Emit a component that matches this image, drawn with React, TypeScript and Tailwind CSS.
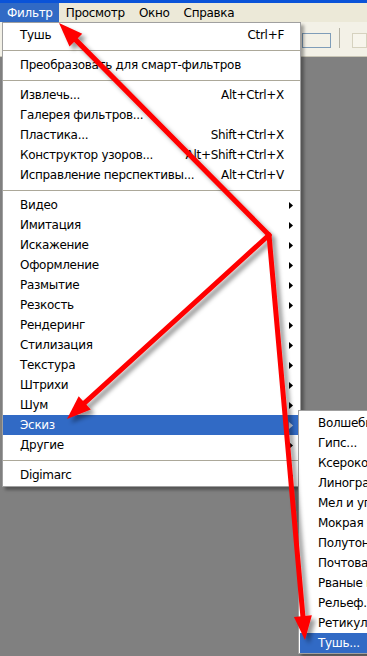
import React from 'react';

type Item =
  | { kind: 'sep' }
  | { kind: 'item'; label: string; shortcut?: string; sub?: boolean; active?: boolean };

const sep: Item = { kind: 'sep' };
const it = (label: string, extra: Partial<{ shortcut: string; sub: boolean; active: boolean }> = {}): Item => ({
  kind: 'item',
  label,
  ...extra,
});

const filterMenu: Item[] = [
  it('Тушь', { shortcut: 'Ctrl+F' }),
  sep,
  it('Преобразовать для смарт-фильтров'),
  sep,
  it('Извлечь...', { shortcut: 'Alt+Ctrl+X' }),
  it('Галерея фильтров...'),
  it('Пластика...', { shortcut: 'Shift+Ctrl+X' }),
  it('Конструктор узоров...', { shortcut: 'Alt+Shift+Ctrl+X' }),
  it('Исправление перспективы...', { shortcut: 'Alt+Ctrl+V' }),
  sep,
  it('Видео', { sub: true }),
  it('Имитация', { sub: true }),
  it('Искажение', { sub: true }),
  it('Оформление', { sub: true }),
  it('Размытие', { sub: true }),
  it('Резкость', { sub: true }),
  it('Рендеринг', { sub: true }),
  it('Стилизация', { sub: true }),
  it('Текстура', { sub: true }),
  it('Штрихи', { sub: true }),
  it('Шум', { sub: true }),
  it('Эскиз', { sub: true, active: true }),
  it('Другие', { sub: true }),
  sep,
  it('Digimarc', { sub: true }),
];

const sketchMenu = [
  'Волшебный маркер...',
  'Гипс...',
  'Ксерокопия...',
  'Линогравюра...',
  'Мел и уголь...',
  'Мокрая бумага...',
  'Полутоновый узор...',
  'Почтовая бумага...',
  'Рваные края...',
  'Рельеф...',
  'Ретикуляция...',
  'Тушь...',
];

const SubArrow = ({ light }: { light?: boolean }) => (
  <svg width="4" height="7" viewBox="0 0 4 7">
    <polygon points="0,0 4,3.5 0,7" fill={light ? '#d6deee' : '#000'} />
  </svg>
);

// red callout arrows drawn over the screenshot
const hub = { x: 269, y: 235 };
const tips = [
  { x: 59, y: 23 },
  { x: 67, y: 419 },
  { x: 305, y: 640 },
];

function head(from: { x: number; y: number }, tip: { x: number; y: number }) {
  const dx = tip.x - from.x;
  const dy = tip.y - from.y;
  const len = Math.hypot(dx, dy);
  const ux = dx / len;
  const uy = dy / len;
  const bx = tip.x - ux * 24;
  const by = tip.y - uy * 24;
  const w = 9;
  return {
    base: { x: bx + ux * 2, y: by + uy * 2 },
    pts: `${tip.x},${tip.y} ${bx - uy * w},${by + ux * w} ${bx + uy * w},${by - ux * w}`,
  };
}

const Arrows = () => (
  <svg className="absolute inset-0 pointer-events-none" width="367" height="656" viewBox="0 0 367 656">
    <defs>
      <filter id="sh" x="-20%" y="-20%" width="140%" height="140%">
        <feDropShadow dx="4" dy="4" stdDeviation="2.2" floodColor="#000" floodOpacity="0.4" />
      </filter>
    </defs>
    <g filter="url(#sh)">
      {tips.map((t, i) => {
        const h = head(hub, t);
        return (
          <g key={i}>
            <line x1={hub.x} y1={hub.y} x2={h.base.x} y2={h.base.y} stroke="#ff0000" strokeWidth="5" strokeLinecap="round" />
            <polygon points={h.pts} fill="#ff0000" />
          </g>
        );
      })}
    </g>
  </svg>
);

export default function App() {
  return (
    <div
      className="relative w-[367px] h-[656px] overflow-hidden flex flex-col bg-[#808080] text-[12px] tracking-[-0.3px] text-black"
      style={{ fontFamily: '"DejaVu Sans", Verdana, sans-serif' }}
    >
      <div className="h-[3px] bg-[#0a53d8]" />
      <div className="h-[19px] bg-[#ece9d8] flex items-center">
        <div className="h-full pl-[7px] pr-[6px] flex items-center bg-[#316ac5] text-white">Фильтр</div>
        <div className="h-full px-[7px] flex items-center">Просмотр</div>
        <div className="h-full px-[7px] flex items-center">Окно</div>
        <div className="h-full px-[7px] flex items-center">Справка</div>
      </div>
      <div className="h-[35px] bg-[#f3f1e7] border-b border-[#c9c6b6] flex items-start pt-[11px] pl-[302px] gap-[8px]">
        <div className="w-[39px] h-[15px] border border-[#7f9db9] bg-[#f3f1e7]" />
        <div className="w-px h-[20px] -mt-[5px] bg-[#b5b2a4]" />
        <div className="w-[20px] h-[15px] ml-[4px] border border-[#d6d2bf] bg-[#f7f5ec]" />
      </div>
      <div className="flex-1 bg-[#808080]" />

      {/* Filter dropdown */}
      <div className="absolute top-[22px] left-[2px] w-[299px] bg-white border border-[#a0a0a0] pt-[2px] pb-[1px] shadow-[3px_3px_3px_rgba(0,0,0,0.35)]">
        {filterMenu.map((m, i) =>
          m.kind === 'sep' ? (
            <div key={i} className="h-[10px] flex items-center">
              <div className="w-full h-px bg-[#aca899]" />
            </div>
          ) : (
            <div
              key={i}
              className={`h-[20px] flex items-center pl-[17px] pr-[7px] whitespace-nowrap ${
                m.active ? 'bg-[#316ac5] text-white' : ''
              }`}
            >
              <span className="flex-1">{m.label}</span>
              {m.shortcut && <span>{m.shortcut}</span>}
              <span className="w-[9px] flex justify-end">{m.sub && <SubArrow light={m.active} />}</span>
            </div>
          )
        )}
      </div>

      {/* Sketch submenu */}
      <div className="absolute top-[410px] left-[298px] w-[170px] bg-white border border-[#a0a0a0] pt-[2px] pl-[1px] shadow-[3px_3px_3px_rgba(0,0,0,0.35)]">
        {sketchMenu.map((label, i) => (
          <div
            key={label}
            className={`h-[20px] flex items-center pl-[18px] whitespace-nowrap ${
              i === sketchMenu.length - 1 ? 'bg-[#316ac5] text-white' : ''
            }`}
          >
            {label}
          </div>
        ))}
      </div>

      <Arrows />
    </div>
  );
}
